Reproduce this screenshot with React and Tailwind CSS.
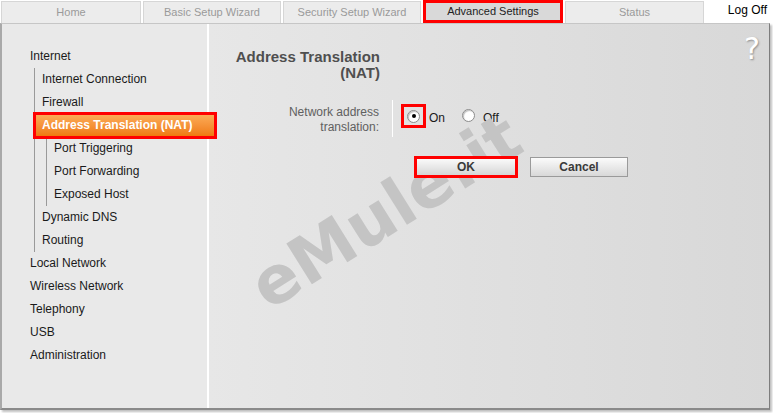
import React from 'react';

const tabs = [
  { label: 'Home', w: 'w-[140px]' },
  { label: 'Basic Setup Wizard', w: 'w-[138px]' },
  { label: 'Security Setup Wizard', w: 'w-[138px]' },
  { label: 'Advanced Settings', w: 'w-[140px]', active: true },
  { label: 'Status', w: 'w-[139px]' },
];

const Radio = ({ checked }) => (
  <span className="w-[13px] h-[13px] rounded-full border border-[#8c8c8c] bg-white shadow-[inset_1px_1px_1px_rgba(0,0,0,0.25)] flex items-center justify-center">
    {checked && <span className="w-[4px] h-[4px] rounded-full bg-black" />}
  </span>
);

const Item = ({ children }) => (
  <div className="h-[23px] leading-[23px] whitespace-nowrap">{children}</div>
);

export default function App() {
  return (
    <div className="relative w-[773px] h-[413px] bg-white overflow-hidden font-['Liberation_Sans',Arial,sans-serif] text-[12px]">
      {/* top tabs */}
      <div className="flex h-[23px] gap-[2px] pl-[1px]">
        {tabs.map((t) =>
          t.active ? (
            <div
              key={t.label}
              className={`${t.w} h-[23px] border-[3px] border-[#ff0000] bg-[#d9d9d9] text-[11px] text-[#222] flex items-center justify-center`}
            >
              {t.label}
            </div>
          ) : (
            <div
              key={t.label}
              className={`${t.w} mt-[1px] h-[22px] border border-b-0 border-[#d6d6d6] bg-[#ececec] text-[11px] text-[#9a9a9a] flex items-center justify-center`}
            >
              {t.label}
            </div>
          )
        )}
        <div className="flex-1 text-right pr-[6px] pt-[1px] text-[12px] text-black">Log Off</div>
      </div>

      {/* panel */}
      <div className="flex w-[770px] h-[387px] border-t border-[#c6c6c6] border-l-2 border-l-[#a9a9a9] border-r border-r-[#7d7d7d] border-b-2 border-b-[#8a8a8a] shadow-[2px_2px_2px_rgba(0,0,0,0.25)]">
        {/* sidebar */}
        <div className="relative z-10 w-[207px] shrink-0 bg-[#e9e9e9] border-r-2 border-r-white pt-[21px] pl-[28px] text-[#1a1a1a]">
          <Item>Internet</Item>
          <div className="ml-[4px] border-l border-[#9a9a9a] pl-[7px]">
            <Item>Internet Connection</Item>
            <Item>Firewall</Item>
            <div className="relative -ml-[9px] w-[184px] h-[27px] my-[-2px] border-[3px] border-[#ff0000] bg-gradient-to-b from-[#fbab55] to-[#ef7a0b] pl-[6px] leading-[21px] text-white font-bold whitespace-nowrap">
              Address Translation (NAT)
            </div>
            <div className="ml-[4px] border-l border-[#9a9a9a] pl-[7px]">
              <Item>Port Triggering</Item>
              <Item>Port Forwarding</Item>
              <Item>Exposed Host</Item>
            </div>
            <Item>Dynamic DNS</Item>
            <Item>Routing</Item>
          </div>
          <Item>Local Network</Item>
          <Item>Wireless Network</Item>
          <Item>Telephony</Item>
          <Item>USB</Item>
          <Item>Administration</Item>
        </div>

        {/* main */}
        <div className="relative flex-1 bg-gradient-to-r from-[#e7e7e7] to-[#d8d8d8] pt-[25px]">
          <div className="w-[171px] text-right text-[15px] leading-[16px] font-bold text-[#4f4f4f]">
            Address Translation
            <br />
            (NAT)
          </div>

          <div className="flex mt-[19px]">
            <div className="w-[184px] h-[37px] border-r border-white pr-[13px] pt-[5px] text-right text-[12px] leading-[15px] text-[#606060]">
              Network address
              <br />
              translation:
            </div>
            <div className="flex items-start pl-[8px] pt-[4px]">
              <div className="w-[25px] h-[24px] border-[3px] border-[#ff0000] flex items-center justify-center">
                <Radio checked />
              </div>
              <span className="ml-[3px] mt-[5px] text-[12px] text-[#1a1a1a]">On</span>
              <span className="ml-[17px] mt-[5px]">
                <Radio />
              </span>
              <span className="ml-[8px] mt-[5px] text-[12px] text-[#1a1a1a]">Off</span>
            </div>
          </div>

          <div className="relative z-10 flex gap-[12px] ml-[205px] mt-[19px]">
            <button className="w-[104px] h-[22px] border-[3px] border-[#ff0000] bg-gradient-to-b from-[#fafafa] to-[#d6d6d6] text-[12px] font-bold text-[#3a3a3a] leading-[16px]">
              OK
            </button>
            <button className="w-[98px] h-[20px] mt-[1px] border border-[#9a9a9a] bg-gradient-to-b from-[#fbfbfb] to-[#d8d8d8] text-[12px] font-bold text-[#3a3a3a] leading-[18px]">
              Cancel
            </button>
          </div>

          {/* help icon */}
          <div className="absolute top-[10px] right-[9px] text-[30px] leading-[30px] text-white font-['DejaVu_Sans',sans-serif] [text-shadow:1px_1px_2px_rgba(0,0,0,0.35)]">
            ?
          </div>
        </div>
      </div>

      {/* watermark */}
      <div className="pointer-events-none absolute left-[386px] top-[212px] -translate-x-1/2 -translate-y-1/2 -rotate-[32deg] font-['DejaVu_Sans',sans-serif] font-bold text-[66px] leading-none text-[#c4c4c4] whitespace-nowrap">
        eMule.it
      </div>
    </div>
  );
}
